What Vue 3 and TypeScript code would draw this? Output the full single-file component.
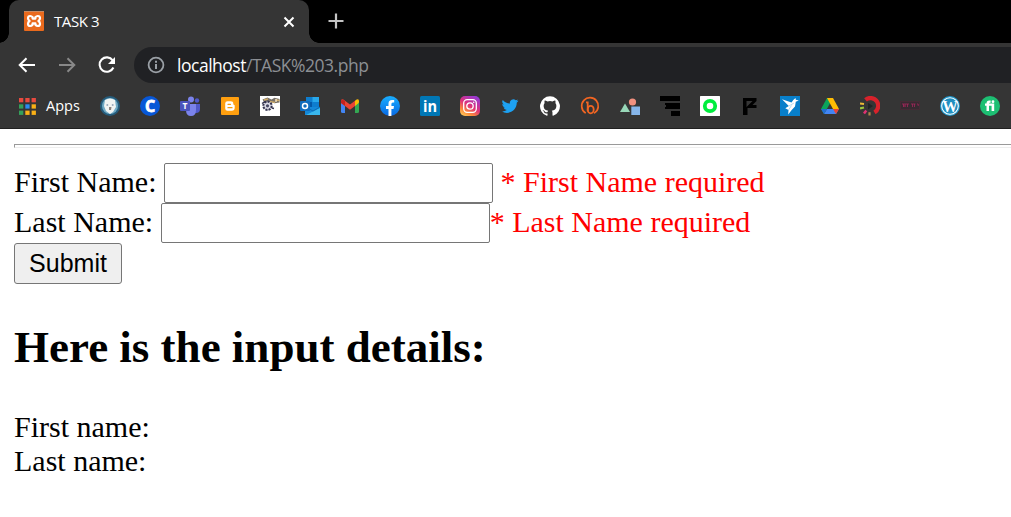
<script setup lang="ts">
import { ref } from 'vue'

const firstName = ref('')
const lastName = ref('')
const appColors: string[] = ['#e84a3f', '#e84a3f', '#e84a3f', '#34a05a', '#2a8cf0', '#f9b016', '#34a05a', '#f9b016', '#f9b016']
</script>

<template>
  <div class="browser">
    <div class="tabstrip">
      <div class="tab">
        <svg class="favicon" viewBox="0 0 20 20">
          <rect width="20" height="20" rx="1" fill="#ea6a1d" />
          <rect width="20" height="1" fill="#c98a62" />
          <path d="M8.600 6.200Q7.600 5 6.200 5 4 5 4 7.300 4 9 5.600 10 4 11 4 12.700 4 15 6.200 15 7.600 15 8.600 13.800M11.400 6.200Q12.400 5 13.800 5 16 5 16 7.300 16 9 14.400 10 16 11 16 12.700 16 15 13.800 15 12.400 15 11.400 13.800M8.600 6.200v1.400h2.800V6.200M8.600 13.800v-1.400h2.800v1.400" fill="none" stroke="#fff" stroke-width="2.200" stroke-linecap="round" stroke-linejoin="round" />
        </svg>
        <span class="title">TASK 3</span>
        <svg class="close" viewBox="0 0 12 12"><path d="M1.500 1.500l9 9M10.500 1.500l-9 9" stroke="#fff" stroke-width="2" /></svg>
      </div>
      <svg class="plus" viewBox="0 0 16 16"><path d="M8 .5v15M.5 8h15" stroke="#c4c4c4" stroke-width="2.200" /></svg>
    </div>

    <div class="toolbar">
      <svg class="nav" viewBox="0 0 18 16"><path d="M17 8H2M8.500 1.200L1.700 8l6.800 6.800" fill="none" stroke="#fff" stroke-width="2" /></svg>
      <svg class="nav forward" viewBox="0 0 18 16"><path d="M1 8h15M9.500 1.200L16.300 8l-6.800 6.800" fill="none" stroke="#888" stroke-width="2" /></svg>
      <svg class="reload" viewBox="0 0 20 18">
        <path d="M15.700 4.400A7.200 7.200 0 1 0 16.400 11.500" fill="none" stroke="#fff" stroke-width="2.100" />
        <path d="M18 1v7h-7z" fill="#fff" />
      </svg>
      <div class="address">
        <svg class="info" viewBox="0 0 18 18"><circle cx="9" cy="9" r="7.400" fill="none" stroke="#9aa0a6" stroke-width="1.800" /><path d="M9 8v5M9 4.800v2" stroke="#9aa0a6" stroke-width="2" /></svg>
        <span class="url">localhost<span class="path">/TASK%203.php</span></span>
      </div>
    </div>

    <div class="bookmarks">
      <svg class="apps" viewBox="0 0 17 17">
        <rect v-for="(c, i) in appColors" :key="i" :x="(i % 3) * 6.300" :y="Math.floor(i / 3) * 6.300" width="4.300" height="4.300" :fill="c" />
      </svg>
      <span class="apps-label">Apps</span>
      <div class="icons">
        <svg viewBox="0 0 20 20">
          <circle cx="10" cy="10" r="10" fill="#255c7c" /><circle cx="10" cy="10" r="8" fill="#6fa9c4" />
          <path d="M5 4q5-3 10 0l1 7-3 5-3 2-4-3-2-5z" fill="#f0f3f2" />
          <circle cx="7.300" cy="9" r="1" fill="#9ab" /><circle cx="12.700" cy="9" r="1" fill="#9ab" /><path d="M9 11h2.500l-.5 3H9z" fill="#8b827e" />
        </svg>
        <svg viewBox="0 0 20 20"><circle cx="10" cy="10" r="10" fill="#0757d7" /><text x="10" y="15.600" class="glyph" font-size="16" fill="#fff" stroke="#fff" stroke-width=".8">C</text></svg>
        <svg viewBox="0 0 20 20">
          <circle cx="17" cy="4.500" r="2.200" fill="#5059c9" /><path d="M14 8h6v5q0 4-4 4h-2z" fill="#5059c9" />
          <circle cx="11" cy="3.500" r="3" fill="#7b83eb" /><path d="M6 8h10v6q0 6-5 6t-5-6z" fill="#7b83eb" />
          <rect y="5" width="10" height="10" rx="1" fill="#4b53bc" /><text x="5" y="13" class="glyph" font-size="8.500" fill="#fff">T</text>
        </svg>
        <svg viewBox="0 0 20 20"><rect x="1" y="1" width="18" height="18" rx="1" fill="#ff9f0f" /><path d="M7.500 5.300h3.200q2.600 0 2.600 2.400 0 1.200 1.400 1.500v2.600q0 3-3 3h-4.200q-2.300 0-2.300-2.300V7.600q0-2.300 2.300-2.300z" fill="#fff" /><path d="M8 8.300h2.500M8 11.700h4" stroke="#f99d0f" stroke-width="1.300" stroke-linecap="round" /></svg>
        <svg viewBox="0 0 20 20">
          <rect width="20" height="20" fill="#fff" />
          <path d="M2.500 3.500l5-2 4 2 3-1.800 5 1.300v3.500l-5 .8-5-1.800-5 1.500z" fill="#77716a" />
          <path d="M4 4l4-1M9 5.500l6 .8M15.500 4l4 .5" stroke="#cfac69" stroke-width="1.300" />
          <path d="M16 3v3" stroke="#fff0cf" stroke-width="1.300" />
          <circle cx="7.500" cy="9.800" r="4.200" fill="#dadae6" stroke="#34344f" stroke-width="2" stroke-dasharray="2.200 1" />
          <circle cx="7.500" cy="9.800" r="1.600" fill="#484964" /><path d="M2 7.500l3-2M12 12l2 .5" stroke="#34344f" stroke-width="1.500" />
        </svg>
        <svg viewBox="0 0 20 20">
          <rect x="6" y="1" width="13" height="11" fill="#0e7dce" /><path d="M12.500 1H19v5h-6.500z" fill="#28a8ea" /><path d="M6 6h6v5H6z" fill="#0358a7" /><path d="M5 11h15v8H5z" fill="#1488d8" /><path d="M20 10v9H6l14-7" fill="#39b7ed" /><path d="M6 11l7 4 7-4" fill="none" stroke="#0b65a9" stroke-width=".8" />
          <rect y="5" width="10" height="10" rx="1" fill="#0f6cbd" /><circle cx="5" cy="10" r="2.500" fill="none" stroke="#fff" stroke-width="1.500" />
        </svg>
        <svg viewBox="0 0 20 20"><path d="M1 5l4 3v9H2.500Q1 17 1 15.500z" fill="#4285f4" /><path d="M19 5l-4 3v9h2.500q1.500 0 1.500-1.500z" fill="#34a853" /><path d="M15 4.800Q19 1.500 19 5.500L18.700 7 15 10z" fill="#fbbc04" /><path d="M1 5.500Q1 1.500 5 4.800l5 3.800 5-3.800V10l-5 3.800L5 10 1 7z" fill="#ea4335" /><path d="M1 7V5.500Q1 3.500 2.500 3.500L5 5v5z" fill="#c5221f" /></svg>
        <svg viewBox="0 0 20 20"><defs><linearGradient id="fb" x2="0" y2="1"><stop stop-color="#19aeff" /><stop offset="1" stop-color="#0868e3" /></linearGradient></defs><circle cx="10" cy="10" r="10" fill="url(#fb)" /><path d="M8.500 20v-7H6v-3h2.500V7.700Q8.500 4 12 4h2.200v2.600h-1.400q-1.400 0-1.400 1.500V10H14l-.5 3h-2.100v7z" fill="#fff" /></svg>
        <svg viewBox="0 0 20 20"><rect width="20" height="20" rx="1.500" fill="#0077b5" /><text x="10" y="16" class="glyph" font-size="15.500" textLength="14" lengthAdjust="spacingAndGlyphs" fill="#fff">in</text></svg>
        <svg viewBox="0 0 20 20">
          <defs><linearGradient id="ig" x1=".1" y1="1" x2=".7" y2="0"><stop stop-color="#ffd05c" /><stop offset=".25" stop-color="#fb8a3c" /><stop offset=".55" stop-color="#df3179" /><stop offset="1" stop-color="#9839d2" /></linearGradient></defs>
          <rect width="20" height="20" rx="5" fill="url(#ig)" /><rect x="3.700" y="3.700" width="12.600" height="12.600" rx="3.500" fill="none" stroke="#fff" stroke-width="1.300" /><circle cx="10" cy="10" r="3.200" fill="none" stroke="#fff" stroke-width="1.300" /><circle cx="13.700" cy="6.300" r=".8" fill="#fff" />
        </svg>
        <svg viewBox="0 0 24 24"><path transform="translate(2 2) scale(.84)" d="M23.950 4.570a10 10 0 0 1-2.820.77 4.960 4.960 0 0 0 2.160-2.720c-.95.550-2 .950-3.130 1.180a4.920 4.920 0 0 0-8.380 4.480C7.690 8.090 4.070 6.130 1.640 3.160a4.920 4.920 0 0 0 1.520 6.570 4.900 4.900 0 0 1-2.230-.61v.06a4.920 4.920 0 0 0 3.950 4.830 5 5 0 0 1-2.210.08 4.940 4.940 0 0 0 4.600 3.420A9.870 9.870 0 0 1 0 19.540a13.990 13.990 0 0 0 7.550 2.210c9.050 0 14-7.500 14-13.980 0-.21 0-.42-.02-.63a9.940 9.940 0 0 0 2.420-2.570z" fill="#1da1f2" /></svg>
        <svg viewBox="0 0 24 24"><path d="M12 .3a12 12 0 0 0-3.800 23.380c.6.120.83-.26.830-.57v-2.230c-3.340.720-4.040-1.420-4.040-1.420-.55-1.380-1.330-1.750-1.330-1.750-1.090-.75.080-.73.080-.73 1.200.080 1.840 1.240 1.840 1.240 1.070 1.830 2.810 1.300 3.490 1 .1-.78.420-1.310.760-1.610-2.670-.3-5.470-1.330-5.470-5.930 0-1.310.470-2.380 1.240-3.220-.14-.3-.54-1.520.1-3.180 0 0 1-.32 3.300 1.230a11.500 11.500 0 0 1 6 0c2.280-1.550 3.290-1.230 3.290-1.230.640 1.660.240 2.880.120 3.180a4.650 4.650 0 0 1 1.230 3.220c0 4.610-2.810 5.630-5.480 5.920.420.360.810 1.100.810 2.220v3.290c0 .320.190.690.800.570A12 12 0 0 0 12 .3" fill="#fff" /></svg>
        <svg viewBox="0 0 20 20"><path d="M5.200 16.700A8.300 8.300 0 1 1 14.500 16.900" fill="none" stroke="#f26522" stroke-width="1.700" stroke-linecap="round" /><path d="M6 6.300h1.700v9" fill="none" stroke="#f26522" stroke-width="1.800" /><ellipse cx="10.700" cy="13.600" rx="3" ry="3.800" fill="none" stroke="#f26522" stroke-width="1.800" /></svg>
        <svg viewBox="0 0 20 20"><path d="M0 16L5 7.500 10 16z" fill="#98d7b8" /><circle cx="12.500" cy="6" r="3.600" fill="#f2917f" /><rect x="11.300" y="10.500" width="8.700" height="8.500" fill="#86b5e9" /></svg>
        <svg viewBox="0 0 20 20"><path d="M0 0h20v5H0zM5 7h15v6H5v-2h1V9H5zM11 15h9v5h-9z" fill="#000" /></svg>
        <svg viewBox="0 0 20 20"><rect width="20" height="20" rx=".5" fill="#fff" /><circle cx="10" cy="10" r="5.200" fill="none" stroke="#00ed3e" stroke-width="3.800" /></svg>
        <svg viewBox="0 0 20 20"><path d="M3 2h13.500v3l-4 4h4v3H7.500v7H3zM6.500 5v6l6-6z" fill="#000" fill-rule="evenodd" /></svg>
        <svg viewBox="0 0 20 20"><rect width="20" height="20" fill="#087fca" /><path d="M2 3.300l9.500 3.200L13.300 4l2.200-2 .3 1.700 3 .8-3 1.300-.8 4.700-3.300 3.500-3.500 4.500.3-4.500-3.200-1.800L8.800 10z" fill="#fff" /><path d="M8.800 10l5-2.800M8.500 14l3-4.500" stroke="#87c5e6" stroke-width=".6" /></svg>
        <svg viewBox="0 0 20 20"><path d="M7 2h6L4 18l-3-5z" fill="#0ba45b" /><path d="M7 2h6l6 11h-6z" fill="#ffbc04" /><path d="M4 18l3-5h12l-3 5z" fill="#4285f4" /><path d="M1 13h6l-3 5z" fill="#236cd4" /><path d="M13 13h6l-3 5z" fill="#ea4335" /></svg>
        <svg viewBox="0 0 20 20"><path d="M5.500 3.800A7.800 7.800 0 1 1 14.500 16.500" fill="none" stroke="#d8222b" stroke-width="4.300" /><path d="M8 7l5 3-5 3.500z" fill="#202325" /><path d="M0 7.500l4 .6" stroke="#edba35" stroke-width="2" /><path d="M0 12.500l4-1" stroke="#9cc63c" stroke-width="2.300" /><path d="M4 17.500l2.300-3" stroke="#e13173" stroke-width="2.500" /><path d="M9.500 19.500v-3.300" stroke="#ac864a" stroke-width="2.200" /></svg>
        <svg viewBox="0 0 20 20"><path d="M.5 5.500h19v8H.5z" fill="#372a31" stroke="#502638" stroke-width=".6" /><path d="M2 8h7M3.500 8v3M5.200 8v3M7.500 8v3M3 10h2M11 8h4.500M12.500 8v3M14.500 8v3M17 8h1.200v2" fill="none" stroke="#a3265a" stroke-width=".8" /></svg>
        <svg viewBox="0 0 20 20"><circle cx="10" cy="10" r="10" fill="#209bd0" /><circle cx="10" cy="10" r="8.300" fill="#208fc0" stroke="#fff" stroke-width="1.100" /><text x="10" y="15.800" class="glyph serif" font-size="17" textLength="15.500" lengthAdjust="spacingAndGlyphs" fill="#fff">W</text></svg>
        <svg viewBox="0 0 20 20"><circle cx="10" cy="10" r="10" fill="#1dbf73" /><path d="M5 7.500h9.200V15h-2.600V9.800H9V15H6.500V9.800H5V7.500h1.500Q6.500 4.600 9.300 4.600h1.300v2.100H9.800q-.8 0-.8.8" fill="#fff" /><circle cx="13" cy="5.700" r="1.400" fill="#fff" /></svg>
      </div>
    </div>
  </div>

  <main>
    <div class="rule"></div>
    <form @submit.prevent>
      <div class="row"><label for="first">First Name:</label><input id="first" v-model="firstName" type="text"><span class="error spaced">* First Name required</span></div>
      <div class="row"><label for="last">Last Name:</label><input id="last" v-model="lastName" type="text"><span class="error">* Last Name required</span></div>
      <button type="submit">Submit</button>
    </form>
    <h2>Here is the input details:</h2>
    <div class="details">
      <div>First name:</div>
      <div>Last name:</div>
    </div>
  </main>
</template>

<style>
html, body { background: #fff; overflow: hidden; }
</style>

<style scoped>
* { box-sizing: border-box; }
svg { display: block; flex: none; }
.browser { height: 129px; background: #353535; border-bottom: 1px solid #202020; font-family: "Open Sans", "Noto Sans", sans-serif; overflow: hidden; }
.tabstrip { display: flex; height: 43px; background: #000; padding-left: 9px; }
.tab { position: relative; width: 300px; height: 43px; display: flex; align-items: center; background: #353535; border-radius: 10px 10px 0 0; padding-left: 15px; }
.tab::before, .tab::after { content: ""; position: absolute; bottom: 0; width: 10px; height: 10px; }
.tab::before { left: -10px; background: radial-gradient(circle at 0 0, transparent 9.500px, #353535 10px); }
.tab::after { right: -10px; background: radial-gradient(circle at 100% 0, transparent 9.500px, #353535 10px); }
.favicon { width: 20px; height: 20px; margin-top: -1px; }
.title { color: #fff; font-size: 15px; letter-spacing: -.4px; line-height: 20px; margin-left: 10px; margin-top: -1px; }
.close { width: 12px; height: 12px; margin-left: auto; margin-right: 14px; }
.plus { width: 16px; height: 16px; margin: 13px 0 0 19px; }
.toolbar { display: flex; align-items: center; height: 43px; padding: 0 0 0 18px; }
.nav { width: 18px; height: 16px; }
.forward { margin-left: 22px; }
.reload { width: 20px; height: 18px; margin-left: 21px; }
.address { display: flex; align-items: center; flex: 1; height: 36px; margin: 1px -30px 0 17px; padding-left: 13px; background: #202124; border-radius: 18px; }
.info { width: 18px; height: 18px; }
.url { color: #fff; font-size: 17.500px; letter-spacing: -.48px; line-height: 24px; margin-left: 12px; white-space: nowrap; }
.path { color: #8c8f93; }
.bookmarks { display: flex; align-items: center; height: 40px; padding-left: 19px; }
.apps { width: 17px; height: 17px; }
.apps-label { color: #fff; font-size: 14.500px; width: 43px; margin-left: 10px; line-height: 20px; }
.icons { display: flex; gap: 20px; margin-left: 11px; }
.icons svg { width: 20px; height: 20px; }
.glyph { font-family: "Open Sans", sans-serif; font-weight: 700; text-anchor: middle; }
.serif { font-family: "Liberation Serif", serif; }
main { font: 30px/34px "Liberation Serif", "Times New Roman", serif; color: #000; padding: 15px 0 0 14px; }
.rule { height: 4px; border-top: 1px solid #9a9a9a; border-left: 1px solid #9a9a9a; border-bottom: 1px solid #eee; }
form { margin-top: 15px; }
.row { display: flex; height: 40px; align-items: center; white-space: nowrap; }
.row label, .error { padding-bottom: 2px; }
input { width: 329px; height: 40px; margin: 0 0 0 7.500px; padding: 2px 4px; border: 1px solid #767676; border-radius: 2px; background: #fff; font: 25px "Liberation Sans", Arial, sans-serif; outline: none; }
.error { color: #f00; }
.spaced { margin-left: 7.500px; }
button { display: block; width: 108px; height: 41px; padding: 0; border: 1px solid #767676; border-radius: 3px; background: #efefef; color: #000; font: 25px "Liberation Sans", Arial, sans-serif; }
h2 { margin: 37px 0 0; font-size: 45px; line-height: 52px; }
.details { margin-top: 37px; }
</style>
